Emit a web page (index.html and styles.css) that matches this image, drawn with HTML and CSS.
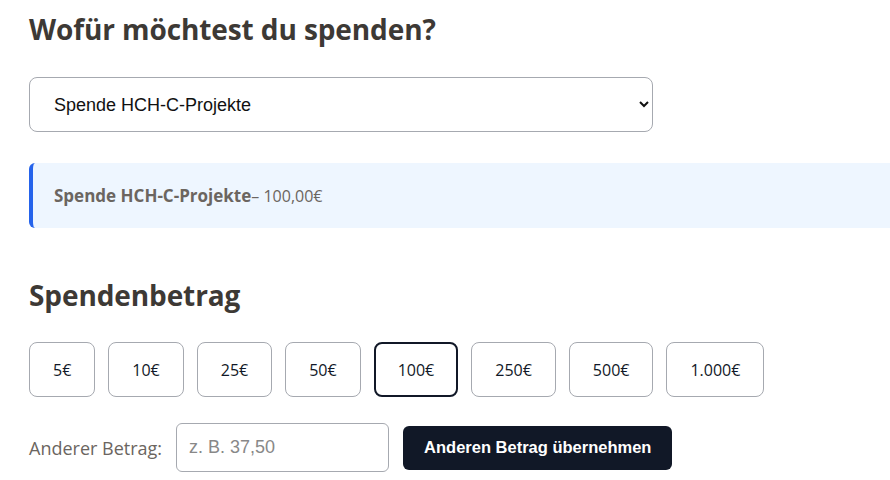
FILE: index.html
```html
<!DOCTYPE html>
<html lang="de">
<head>
	<title>Spenden</title>
	<meta charset="utf-8">
	<link rel="stylesheet" href="styles.css">
</head>
<body>
	<section class="donate">
		<h2 class="title">Wofür möchtest du spenden?</h2>
		<select class="purpose">
			<option>Spende HCH-C-Projekte</option>
		</select>

		<div class="summary">
			<strong>Spende HCH-C-Projekte</strong>– 100,00€
		</div>

		<h2 class="title amount-title">Spendenbetrag</h2>
		<div class="amounts">
			<button class="amount">5€</button>
			<button class="amount">10€</button>
			<button class="amount">25€</button>
			<button class="amount">50€</button>
			<button class="amount active">100€</button>
			<button class="amount">250€</button>
			<button class="amount">500€</button>
			<button class="amount">1.000€</button>
		</div>

		<div class="custom">
			<label for="other">Anderer Betrag:</label>
			<input id="other" type="text" placeholder="z. B. 37,50">
			<button class="apply">Anderen Betrag übernehmen</button>
		</div>
	</section>
</body>
</html>
```

FILE: styles.css
```css
*{
	box-sizing: border-box;
}

body{
	margin: 0;
	background: #fff;
	font-family: 'Open Sans', sans-serif;
	overflow: hidden;
}

.donate{
	padding: 0 0 0 29px;
	width: 920px;
}

.title{
	margin: 0;
	padding-top: 10px;
	font-size: 28px;
	font-weight: 700;
	color: #3d3935;
	letter-spacing: -0.1px;
	line-height: 38px;
}

.purpose{
	display: block;
	margin-top: 29px;
	width: 624px;
	height: 55px;
	padding: 0 10px 0 20px;
	font-family: 'Liberation Sans', Arial, sans-serif;
	font-size: 18px;
	color: #111;
	background: #fff;
	border: 1px solid #a6a9b0;
	border-radius: 8px;
}

.summary{
	margin-top: 31px;
	height: 65px;
	padding: 0 21px;
	display: flex;
	align-items: center;
	background: #eef6ff;
	border-left: 4px solid #2563eb;
	border-radius: 6px 0 0 6px;
	font-size: 16px;
	color: #6b6560;
}

.summary strong{
	font-weight: 700;
	font-size: 17px;
}

.amount-title{
	margin-top: 48px;
	padding-top: 0;
}

.amounts{
	display: flex;
	gap: 13px;
	margin-top: 28px;
}

.amount{
	height: 55px;
	padding: 0 23px;
	font-family: 'Open Sans', sans-serif;
	font-size: 16px;
	color: #111827;
	background: #fff;
	border: 1px solid #a6a9b0;
	border-radius: 8px;
}

.amount.active{
	border: 2px solid #111827;
	padding: 0 22px;
}

.custom{
	display: flex;
	align-items: center;
	margin-top: 26px;
}

.custom label{
	font-size: 18px;
	color: #6b6560;
	margin-right: 14px;
}

.custom input{
	width: 213px;
	height: 49px;
	padding: 0 12px;
	font-family: 'Liberation Sans', Arial, sans-serif;
	font-size: 18px;
	border: 1px solid #a6a9b0;
	border-radius: 6px;
}

.custom input::placeholder{
	color: #888;
}

.apply{
	margin-left: 14px;
	height: 44px;
	padding: 0 21px;
	font-family: 'Liberation Sans', Arial, sans-serif;
	font-size: 16.5px;
	font-weight: 700;
	color: #fff;
	background: #111827;
	border: none;
	border-radius: 6px;
}
```
